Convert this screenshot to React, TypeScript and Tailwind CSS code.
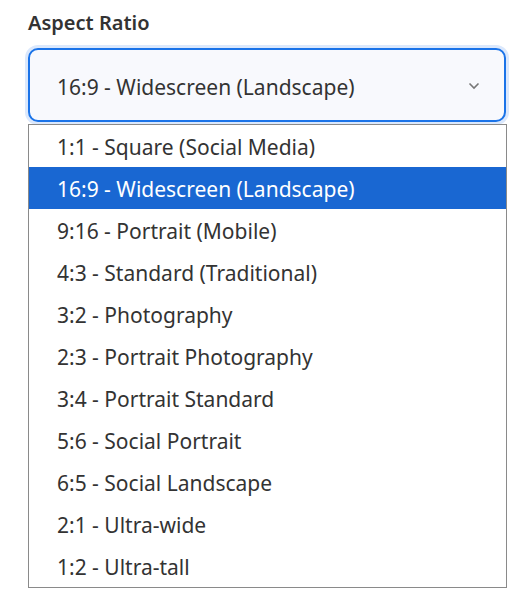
import React from "react";

const options = [
  "1:1 - Square (Social Media)",
  "16:9 - Widescreen (Landscape)",
  "9:16 - Portrait (Mobile)",
  "4:3 - Standard (Traditional)",
  "3:2 - Photography",
  "2:3 - Portrait Photography",
  "3:4 - Portrait Standard",
  "5:6 - Social Portrait",
  "6:5 - Social Landscape",
  "2:1 - Ultra-wide",
  "1:2 - Ultra-tall",
];

export default function App() {
  return (
    <div
      className="w-[522px] h-[600px] bg-white pl-[28px] pr-[16px] pt-[8px]"
      style={{ fontFamily: '"Noto Sans", "Open Sans", sans-serif' }}
    >
      <div className="text-[20px] font-semibold text-[#333] leading-[30px]">Aspect Ratio</div>
      <div className="mt-[10px] h-[74px] w-[478px] rounded-[10px] border-2 border-[#1a73e8] bg-[#f8f9fd] shadow-[0_0_0_3px_#dbe8fc] flex items-center justify-between pl-[27px] pr-[24px]">
        <span className="text-[21px] text-[#333] pt-[5px]">16:9 - Widescreen (Landscape)</span>
        <svg width="12" height="8" viewBox="0 0 12 8" className="mt-[2px]">
          <path d="M1.5 1.5 L6 6 L10.5 1.5" stroke="#777" strokeWidth="1.6" fill="none" />
        </svg>
      </div>
      <div className="mt-[2px] w-[479px] border border-[#8a8a8a] bg-white">
        {options.map((o, i) => (
          <div
            key={o}
            className={
              "h-[42px] flex items-center pl-[28px] pt-[3px] text-[21px] " +
              (i === 1 ? "bg-[#1967d2] text-white" : "text-[#333]")
            }
          >
            {o}
          </div>
        ))}
      </div>
    </div>
  );
}
